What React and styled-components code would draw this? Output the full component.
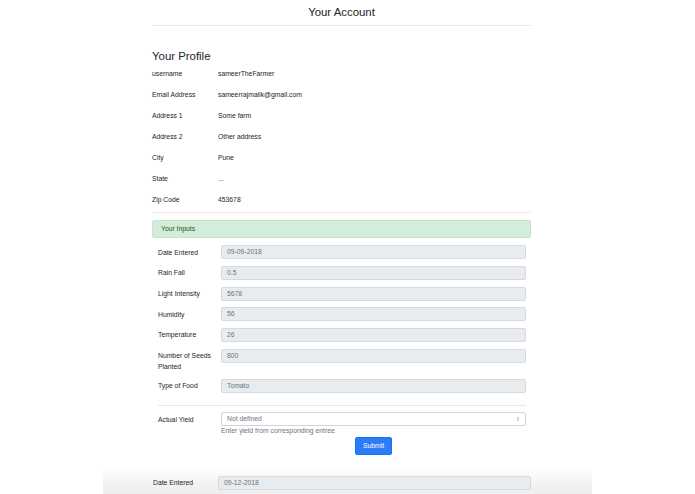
import React from "react";
import styled, { createGlobalStyle } from "styled-components";

const Global = createGlobalStyle`
  html, body { margin: 0; padding: 0; background: #ffffff; overflow: hidden; }
  body { font-family: "Liberation Sans", Arial, Helvetica, sans-serif; color: #212529; }
  * { box-sizing: border-box; }
`;

const Page = styled.div`
  width: 695px;
  height: 494px;
  overflow: hidden;
  position: relative;
`;

const Container = styled.div`
  margin-left: 152px;
  width: 379px;
  display: flex;
  flex-direction: column;
`;

const Title = styled.h1`
  margin: 5px 0 0;
  font-size: 11.4px;
  line-height: 14px;
  font-weight: 500;
  text-align: center;
  color: #212529;
`;

const Rule = styled.hr`
  margin: ${(p) => p.$top || 0}px ${(p) => p.$side || 0}px 0;
  border: 0;
  border-top: 1px solid #e8e8e8;
  height: 0;
`;

const Heading = styled.h2`
  margin: 22.5px 0 0;
  font-size: 11.4px;
  line-height: 14px;
  font-weight: 500;
  color: #212529;
`;

const ProfileRow = styled.div`
  display: flex;
  align-items: center;
  height: 21px;
  font-size: 6.8px;
`;

const ProfileLabel = styled.div`
  width: 66px;
  flex: none;
`;

const ProfileValue = styled.div``;

const Alert = styled.div`
  margin-top: 7px;
  height: 18px;
  line-height: 16px;
  background: #d4edda;
  border: 1px solid #c3e6cb;
  border-radius: 2px;
  color: #155724;
  font-size: 6.8px;
  padding-left: 8px;
`;

const Form = styled.div`
  padding: 0 5px 0 6px;
  margin-top: 7.3px;
  display: flex;
  flex-direction: column;
`;

const FieldRow = styled.div`
  display: flex;
  align-items: flex-start;
  margin-bottom: ${(p) => (p.$last ? 0 : 6.7)}px;
  margin-top: ${(p) => p.$top || 0}px;
`;

const FieldLabel = styled.div`
  width: ${(p) => p.$w || 63}px;
  flex: none;
  font-size: 6.8px;
  line-height: 10.5px;
  padding-top: 2.4px;
  padding-right: 6px;
  color: #212529;
`;

const FieldControl = styled.div`
  flex: 1;
  display: flex;
  flex-direction: column;
  align-items: stretch;
`;

const ReadOnlyInput = styled.div`
  height: 14px;
  background: #e9ecef;
  border: 1px solid #d6dadf;
  border-radius: 2px;
  padding-left: 5px;
  font-size: 6.8px;
  line-height: 12px;
  color: #6c737a;
`;

const Select = styled.div`
  height: 14px;
  background: #ffffff;
  border: 1px solid #ced4da;
  border-radius: 2px;
  padding: 0 5px;
  font-size: 6.8px;
  line-height: 12px;
  color: #6c737a;
  display: flex;
  align-items: center;
  justify-content: space-between;
`;

const Help = styled.div`
  font-size: 6.8px;
  line-height: 10px;
  color: #6c757d;
`;

const ButtonWrap = styled.div`
  display: flex;
  justify-content: center;
  margin-top: 0.3px;
`;

const Button = styled.button`
  width: 37px;
  height: 18px;
  border: 1px solid #007bff;
  background: #2f7bf6;
  color: #ffffff;
  border-radius: 2px;
  font-family: inherit;
  font-size: 6.8px;
  font-weight: 500;
  padding: 0;
  cursor: pointer;
`;

const Band = styled.div`
  margin-top: 13px;
  margin-left: 103px;
  width: 489px;
  height: 40px;
  padding: 8px 61px 0 50px;
  background: linear-gradient(to bottom, #ffffff 0%, #f1f1f1 45%, #e9e9e9 100%);
  display: flex;
  align-items: flex-start;
`;

const Caret = () => (
  <svg width="4" height="6" viewBox="0 0 4 6">
    <path d="M0.5 2.4 L2 0.8 L3.5 2.4 Z M0.5 3.6 L2 5.2 L3.5 3.6 Z" fill="#b5b9bd" />
  </svg>
);

const profile = [
  ["username", "sameerTheFarmer"],
  ["Email Address", "sameerrajmalik@gmail.com"],
  ["Address 1", "Some farm"],
  ["Address 2", "Other address"],
  ["City", "Pune"],
  ["State", "..."],
  ["Zip Code", "453678"],
];

const inputs = [
  ["Date Entered", "09-09-2018"],
  ["Rain Fall", "0.5"],
  ["Light Intensity", "5678"],
  ["Humidity", "56"],
  ["Temperature", "26"],
  ["Number of Seeds Planted", "800"],
  ["Type of Food", "Tomato"],
];

export default function App() {
  return (
    <Page>
      <Global />
      <Container>
        <Title>Your Account</Title>
        <Rule $top={6} />
        <Heading>Your Profile</Heading>
        {profile.map(([k, v]) => (
          <ProfileRow key={k}>
            <ProfileLabel>{k}</ProfileLabel>
            <ProfileValue>{v}</ProfileValue>
          </ProfileRow>
        ))}
        <Rule $top={2.5} />
        <Alert>Your Inputs</Alert>
        <Form>
          {inputs.map(([k, v]) => (
            <FieldRow key={k}>
              <FieldLabel>{k}</FieldLabel>
              <FieldControl>
                <ReadOnlyInput>{v}</ReadOnlyInput>
              </FieldControl>
            </FieldRow>
          ))}
          <Rule $top={5.2} />
          <FieldRow $top={6.7} $last>
            <FieldLabel>Actual Yield</FieldLabel>
            <FieldControl>
              <Select>
                <span>Not defined</span>
                <Caret />
              </Select>
              <Help>Enter yield from corresponding entree</Help>
              <ButtonWrap>
                <Button>Submit</Button>
              </ButtonWrap>
            </FieldControl>
          </FieldRow>
        </Form>
      </Container>
      <Band>
        <FieldLabel $w={65}>Date Entered</FieldLabel>
        <FieldControl>
          <ReadOnlyInput>09-12-2018</ReadOnlyInput>
        </FieldControl>
      </Band>
    </Page>
  );
}
